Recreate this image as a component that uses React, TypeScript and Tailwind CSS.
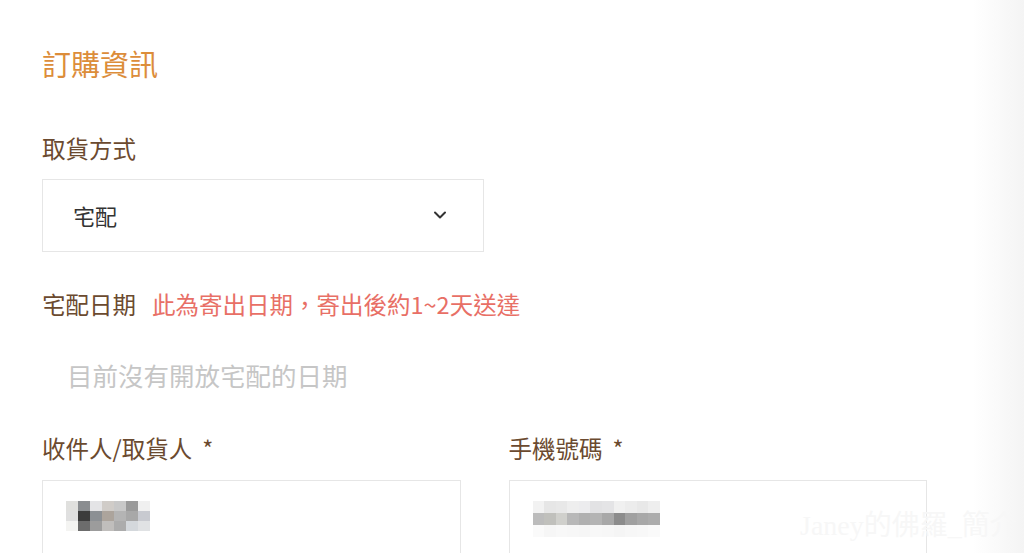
import { ChevronDown } from "lucide-react";

const nameBlocks = [
  ["#e0e0de", "#8a8d90", "#e4e4e6", "#d0ccc8", "#c8c8c8", "#9a9a9a", "#f0f0f0"],
  ["#e0e0e0", "#3c3c3c", "#8c9094", "#aca49c", "#b4b4b4", "#a8a8a8", "#c8cad0"],
  ["#f4f4f2", "#6c6c6c", "#9c9c9c", "#c0bebc", "#acacac", "#d4d8dc", "#e0e2e4"],
];

const phoneBlocks = [
  ["#f2f2f2", "#e6e6e6", "#e8e8e8", "#eeeeee", "#ececee", "#e2e2e4", "#e4e4e6", "#f0f0f0", "#ececec", "#e8e8e8", "#eeeeee"],
  ["#bcbcbc", "#c0c0bc", "#d0d0cc", "#b8b8b8", "#b0b0b0", "#b4b4b4", "#a8a8a8", "#8c8c8c", "#a0a0a0", "#a8a8a8", "#acacac"],
  ["#fafafa", "#f6f6f6", "#f8f8f8", "#f7f7f7", "#f6f6f6", "#f8f8f8", "#f7f7f7", "#f5f5f5", "#f7f7f7", "#f8f8f8", "#fafafa"],
];

const Pixelated = ({ rows, cell }: { rows: string[][]; cell: string }) => (
  <div className="flex flex-col">
    {rows.map((row, i) => (
      <div key={i} className="flex">
        {row.map((c, j) => (
          <div key={j} className={cell} style={{ backgroundColor: c }} />
        ))}
      </div>
    ))}
  </div>
);

export default function App() {
  return (
    <div
      className="relative w-[1024px] h-[553px] overflow-hidden bg-[linear-gradient(to_right,#ffffff_95%,#f4f4f4)] [font-family:'Noto_Sans_CJK_TC','Noto_Sans',sans-serif]"
    >
      <div className="pl-[42px] pt-[49px] w-[927px]">
        {/* Title */}
        <h2 className="text-[29px] leading-none text-[#dc8d3a]">訂購資訊</h2>

        {/* Pickup method */}
        <div className="mt-[59px] text-[23.5px] leading-none text-[#6b4a2f]">取貨方式</div>
        <div className="mt-[18px] w-[442px] h-[73px] border border-[#e6e6e6] flex items-center justify-between pl-[30px] pr-[33px]">
          <span className="text-[22px] leading-none text-[#333333]">宅配</span>
          <ChevronDown className="w-[20px] h-[20px] text-[#333333]" strokeWidth={2.4} />
        </div>

        {/* Delivery date */}
        <div className="mt-[41px] flex items-center gap-[16px] text-[23.5px] leading-none">
          <span className="text-[#6b4a2f]">宅配日期</span>
          <span className="text-[#e86f66]">此為寄出日期，寄出後約1~2天送達</span>
        </div>
        <div className="mt-[46px] pl-[25px] text-[25.5px] leading-none text-[#c6c6c6]">
          目前沒有開放宅配的日期
        </div>

        {/* Receiver */}
        <div className="mt-[49px] grid grid-cols-2 gap-x-[48px]">
          <div>
            <div className="text-[23.5px] leading-none text-[#6b4a2f]">
              收件人/取貨人<span className="ml-[10px]">*</span>
            </div>
            <div className="mt-[20px] h-[90px] border border-[#e6e6e6] pl-[23px] pt-[20px]">
              <Pixelated rows={nameBlocks} cell="w-[12px] h-[10px]" />
            </div>
          </div>
          <div>
            <div className="text-[23.5px] leading-none text-[#6b4a2f]">
              手機號碼<span className="ml-[10px]">*</span>
            </div>
            <div className="mt-[20px] h-[90px] border border-[#e6e6e6] pl-[23px] pt-[20px]">
              <Pixelated rows={phoneBlocks} cell="w-[11.6px] h-[12px]" />
            </div>
          </div>
        </div>
      </div>

      {/* faint watermark */}
      <div className="absolute left-[800px] top-[505px] text-[28px] text-[#f7f7f7] [font-family:'Liberation_Serif','Noto_Sans_CJK_TC',serif] pointer-events-none">
        Janey的佛羅_簡介
      </div>
    </div>
  );
}
